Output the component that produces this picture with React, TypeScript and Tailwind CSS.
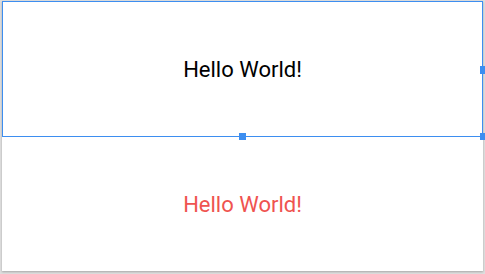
export default function App() {
  return (
    <div
      className="w-[485px] h-[274px] bg-[#dedede] pl-[2px] pt-[1px]"
      style={{ fontFamily: "Roboto, 'Noto Sans', sans-serif" }}
    >
      <div className="w-[481px] h-[270px] bg-white shadow-[0_1px_2px_rgba(0,0,0,0.25)] flex flex-col">
        <div className="relative h-[136px] border border-[#3d8ef0] flex items-center justify-center">
          <span className="text-[22px] text-black leading-none mt-[2px]">Hello World!</span>
          <div className="absolute right-[-4px] top-[64px] w-[6px] h-[8px] bg-[#3d8ef0]" />
          <div className="absolute left-[236px] bottom-[-4px] w-[7px] h-[7px] bg-[#3d8ef0]" />
          <div className="absolute right-[-4px] bottom-[-4px] w-[6px] h-[7px] bg-[#3d8ef0]" />
        </div>
        <div className="flex-1 flex items-center justify-center">
          <span className="text-[22px] text-[#ef5350] leading-none mt-[2px]">Hello World!</span>
        </div>
      </div>
    </div>
  );
}
